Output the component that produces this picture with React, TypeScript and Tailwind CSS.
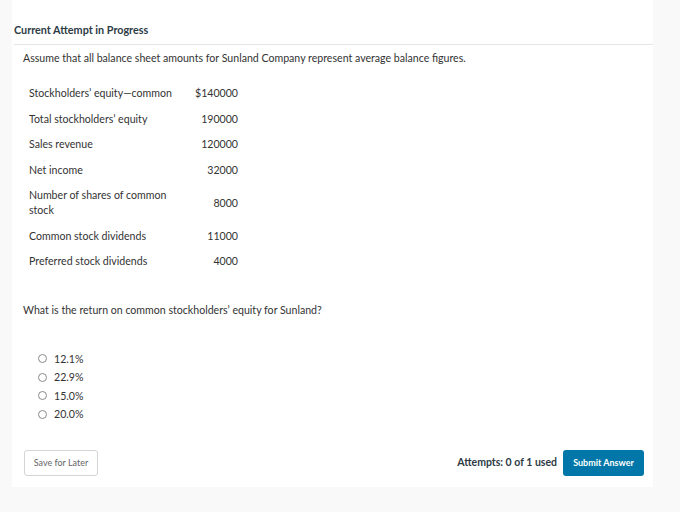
const rows: { label: string; value: string }[] = [
  { label: "Stockholders’ equity—common", value: "$140000" },
  { label: "Total stockholders’ equity", value: "190000" },
  { label: "Sales revenue", value: "120000" },
  { label: "Net income", value: "32000" },
  { label: "Number of shares of common stock", value: "8000" },
  { label: "Common stock dividends", value: "11000" },
  { label: "Preferred stock dividends", value: "4000" },
];

const options = ["12.1%", "22.9%", "15.0%", "20.0%"];

export default function App() {
  return (
    <div className="h-[512px] w-[680px] bg-[#f9f9f9] font-['Lato','Liberation_Sans',sans-serif] text-[#333]">
      <div className="ml-[12px] flex h-[487px] w-[641px] flex-col bg-white">
        <div className="ml-[2px] border-b border-[#e6e6e6] pb-[7px] pt-[23px] text-[10.8px] font-bold leading-[14px] text-[#2d3b45]">
          Current Attempt in Progress
        </div>

        <p className="ml-[11px] mt-[6px] text-[10.6px] leading-[14px]">
          Assume that all balance sheet amounts for Sunland Company represent average balance figures.
        </p>

        <div className="ml-[9px] mt-[16px] flex flex-col text-[10.6px] leading-[15px]">
          {rows.map((r) => (
            <div key={r.label} className="flex items-center py-[5.25px]">
              <div className="w-[162px] pl-[8px] pr-[4px]">{r.label}</div>
              <div className="w-[55px] text-right">{r.value}</div>
            </div>
          ))}
        </div>

        <p className="ml-[11px] mt-[28px] text-[10.6px] leading-[14px]">
          What is the return on common stockholders’ equity for Sunland?
        </p>

        <div className="ml-[26px] mt-[35px] flex flex-col gap-[4.5px] text-[10.6px] leading-[14px]">
          {options.map((o) => (
            <label key={o} className="flex items-center gap-[7px]">
              <span className="inline-block h-[9px] w-[9px] rounded-full border border-[#8a8a8a] bg-white" />
              <span>{o}</span>
            </label>
          ))}
        </div>

        <div className="mt-auto mb-[11px] flex items-center justify-between pl-[12px] pr-[9px]">
          <button className="h-[26px] w-[74px] rounded-[3px] border border-[#d4d4d4] bg-white text-[9px] text-[#666]">
            Save for Later
          </button>
          <div className="flex items-center gap-[6px]">
            <span className="text-[10.5px] font-bold text-[#2d3b45]">Attempts: 0 of 1 used</span>
            <button className="h-[26px] w-[81px] rounded-[3px] bg-[#0077a8] text-[9px] font-bold text-white">
              Submit Answer
            </button>
          </div>
        </div>
      </div>
    </div>
  );
}
